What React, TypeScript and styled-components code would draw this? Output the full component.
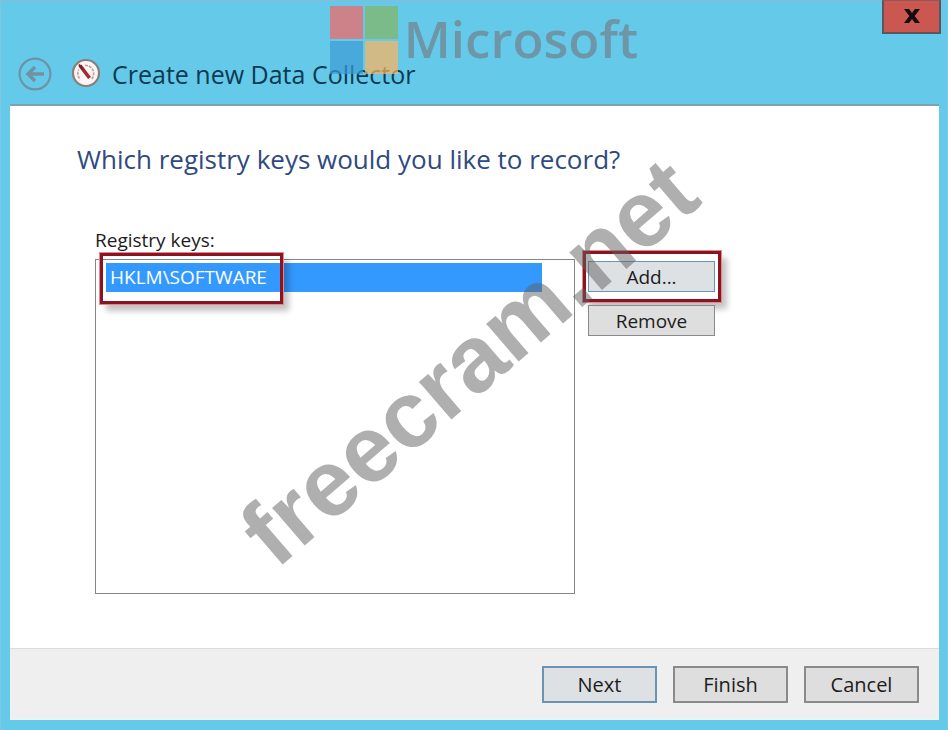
import React, { useState } from "react";
import styled, { createGlobalStyle, css } from "styled-components";

const GlobalStyle = createGlobalStyle`
  *, *::before, *::after { box-sizing: border-box; }
  body {
    margin: 0;
    font-family: "Open Sans", "Noto Sans", sans-serif;
    color: #1c1c1c;
  }
`;

const Window = styled.main`
  position: relative;
  display: flex;
  flex-direction: column;
  min-height: 100vh;
  padding: 0 9px 10px 10px;
  overflow: hidden;
  background: #65caea;
  box-shadow: inset 0 1px 0 #86bcd6, inset 1px 0 0 #7fc6e0, inset -1px 0 0 #7fc6e0;
`;

const TitleBar = styled.header`
  display: flex;
  align-items: flex-start;
  justify-content: space-between;
  height: 106px;
  border-bottom: 2px solid #7ba3b3;
`;

const TitleGroup = styled.div`
  display: flex;
  align-items: center;
  height: 34px;
  margin: 57px 0 0 8px;
`;

const BackButton = styled.button`
  display: flex;
  padding: 0;
  border: 0;
  background: none;
  cursor: pointer;
`;

const GaugeIcon = styled.svg`
  margin: 0 11px 2px 19px;
`;

const Title = styled.h1`
  margin: 0;
  font-size: 25px;
  line-height: 34px;
  font-weight: 400;
  color: #0b3a52;
  white-space: nowrap;
`;

const CloseButton = styled.button`
  display: flex;
  align-items: center;
  justify-content: center;
  width: 59px;
  height: 34px;
  margin-right: -2px;
  padding: 0 0 2px;
  border: 2px solid #5a5560;
  border-top: 1px solid #8d5b5e;
  background: #ca5850;
  cursor: pointer;
`;

const Content = styled.section`
  display: flex;
  flex: 1;
  flex-direction: column;
  padding: 33px 67px 54px;
  background: #ffffff;
`;

const Question = styled.h2`
  margin: 0 0 48px;
  font-size: 26px;
  line-height: 40px;
  font-weight: 400;
  color: #2f4a80;
`;

const Field = styled.div`
  display: flex;
  flex: 1;
  flex-direction: column;
  padding-left: 18px;
`;

const FieldLabel = styled.span`
  margin-bottom: 6px;
  font-size: 19px;
  line-height: 26px;
`;

const FieldRow = styled.div`
  display: flex;
  flex: 1;
  align-items: stretch;
  gap: 13px;
`;

const KeyList = styled.ul`
  flex: 1;
  max-width: 480px;
  min-height: 200px;
  margin: 0;
  padding: 3px 32px 0 10px;
  list-style: none;
  border: 1px solid #85858a;
  background: #ffffff;
`;

const KeyItem = styled.li<{ $selected: boolean }>`
  position: relative;
  padding: 0 4px;
  font-size: 19px;
  line-height: 29px;
  color: ${(p) => (p.$selected ? "#ffffff" : "#1c1c1c")};
  background: ${(p) => (p.$selected ? "#3399ff" : "transparent")};
  cursor: default;
`;

const SideButtons = styled.div`
  display: flex;
  flex-direction: column;
  gap: 13px;
  width: 127px;
  padding-top: 2px;
`;

const ButtonSlot = styled.div`
  position: relative;
  display: flex;
`;

const calloutFrame = css`
  position: absolute;
  border: 3px solid #8c1420;
  outline: 1px solid #e08a90;
  box-shadow: 6px 7px 6px rgba(0, 0, 0, 0.24);
  pointer-events: none;
`;

const ItemCallout = styled.span`
  ${calloutFrame}
  top: -10px;
  left: -6px;
  width: 183px;
  height: 51px;
`;

const ButtonCallout = styled.span`
  ${calloutFrame}
  inset: -10px -6px -10px -5px;
`;

const Button = styled.button<{ $size: "small" | "large"; $primary?: boolean }>`
  flex: ${(p) => (p.$size === "small" ? "1" : "none")};
  width: ${(p) => (p.$size === "small" ? "auto" : "115px")};
  height: ${(p) => (p.$size === "small" ? "31px" : "37px")};
  padding: 0;
  border: ${(p) => (p.$size === "small" ? "1px" : "2px")} solid
    ${(p) => (p.$primary ? "#6c94b2" : "#8a8a8c")};
  background: ${(p) => (p.$primary ? "#dde1e4" : "#dfdede")};
  color: #1c1c1c;
  font-family: inherit;
  font-size: ${(p) => (p.$size === "small" ? "19px" : "20px")};
  line-height: 26px;
  cursor: pointer;
`;

const Footer = styled.footer`
  display: flex;
  justify-content: flex-end;
  gap: 16px;
  padding: 17px 20px 16px;
  border-top: 1px solid #dcdcdc;
  border-bottom: 1px solid #e4f6fc;
  background: #efeff0;
`;

const BrandMark = styled.div`
  position: absolute;
  top: 6px;
  left: 0;
  right: 0;
  display: flex;
  justify-content: center;
  gap: 5px;
  padding-left: 20px;
  opacity: 0.7;
  pointer-events: none;
`;

const BrandName = styled.span`
  font-size: 51px;
  line-height: 64px;
  font-weight: 600;
  color: #72818b;
`;

const SiteMark = styled.div`
  position: absolute;
  inset: 0;
  display: flex;
  align-items: center;
  justify-content: center;
  padding: 0 9px 6px 0;
  pointer-events: none;
`;

const SiteMarkText = styled.span`
  font-family: "Liberation Sans", sans-serif;
  font-size: 94px;
  line-height: 110px;
  font-weight: 700;
  color: rgba(96, 96, 96, 0.5);
  white-space: nowrap;
  transform: rotate(-40.7deg);
`;

const keys = ["HKLM\\SOFTWARE"];

export default function App() {
  const [selected, setSelected] = useState(keys[0]);

  return (
    <>
      <GlobalStyle />
      <Window>
        <TitleBar>
          <TitleGroup>
            <BackButton type="button" aria-label="Back">
              <svg width="34" height="34" viewBox="0 0 34 34" fill="none" stroke="#6f93a3">
                <circle cx="17" cy="17" r="15.4" strokeWidth="2.2" />
                <path d="M26 17H10M17 10l-7 7 7 7" strokeWidth="3.4" />
              </svg>
            </BackButton>
            <GaugeIcon width="30" height="30" viewBox="0 0 30 30" fill="none">
              <circle cx="15" cy="15" r="13" fill="#fbf6f3" stroke="#8b7d78" strokeWidth="2.2" />
              <path d="M8.5 20.5a8.5 8.5 0 0 1-.8-9M14 7.2a8.5 8.5 0 0 1 6.8 13.8" stroke="#c99c94" strokeWidth="1.6" strokeDasharray="3 1" />
              <path d="M9 7.5l9.5 12.5" stroke="#a32a33" strokeWidth="3.6" />
              <path d="M8 6.5l4 5" stroke="#5c2733" strokeWidth="2" />
            </GaugeIcon>
            <Title>Create new Data Collector</Title>
          </TitleGroup>
          <CloseButton type="button" aria-label="Close">
            <svg width="16" height="14" viewBox="0 0 16 14" fill="#140c0d">
              <path d="M0 0h5l3 4 3-4h5l-5.3 7 5.3 7h-5l-3-4-3 4H0l5.3-7z" />
            </svg>
          </CloseButton>
        </TitleBar>

        <Content>
          <Question>Which registry keys would you like to record?</Question>
          <Field>
            <FieldLabel id="registry-keys-label">Registry keys:</FieldLabel>
            <FieldRow>
              <KeyList role="listbox" aria-labelledby="registry-keys-label" tabIndex={0}>
                {keys.map((key) => (
                  <KeyItem
                    key={key}
                    role="option"
                    aria-selected={key === selected}
                    $selected={key === selected}
                    onClick={() => setSelected(key)}
                  >
                    {key}
                    <ItemCallout />
                  </KeyItem>
                ))}
              </KeyList>
              <SideButtons>
                <ButtonSlot>
                  <Button type="button" $size="small" $primary>Add...</Button>
                  <ButtonCallout />
                </ButtonSlot>
                <ButtonSlot>
                  <Button type="button" $size="small">Remove</Button>
                </ButtonSlot>
              </SideButtons>
            </FieldRow>
          </Field>
        </Content>

        <Footer>
          <Button type="button" $size="large" $primary>Next</Button>
          <Button type="button" $size="large">Finish</Button>
          <Button type="button" $size="large">Cancel</Button>
        </Footer>

        <BrandMark>
          <svg width="69" height="69" viewBox="0 0 69 69">
            <path fill="#fa6462" d="M0 0h33v33H0z" />
            <path fill="#85b562" d="M35 0h33v33H35z" />
            <path fill="#3c9cd6" d="M0 35h33v33H0z" />
            <path fill="#ffb45d" d="M35 35h33v33H35z" />
          </svg>
          <BrandName>Microsoft</BrandName>
        </BrandMark>
        <SiteMark aria-hidden="true">
          <SiteMarkText>freecram.net</SiteMarkText>
        </SiteMark>
      </Window>
    </>
  );
}
